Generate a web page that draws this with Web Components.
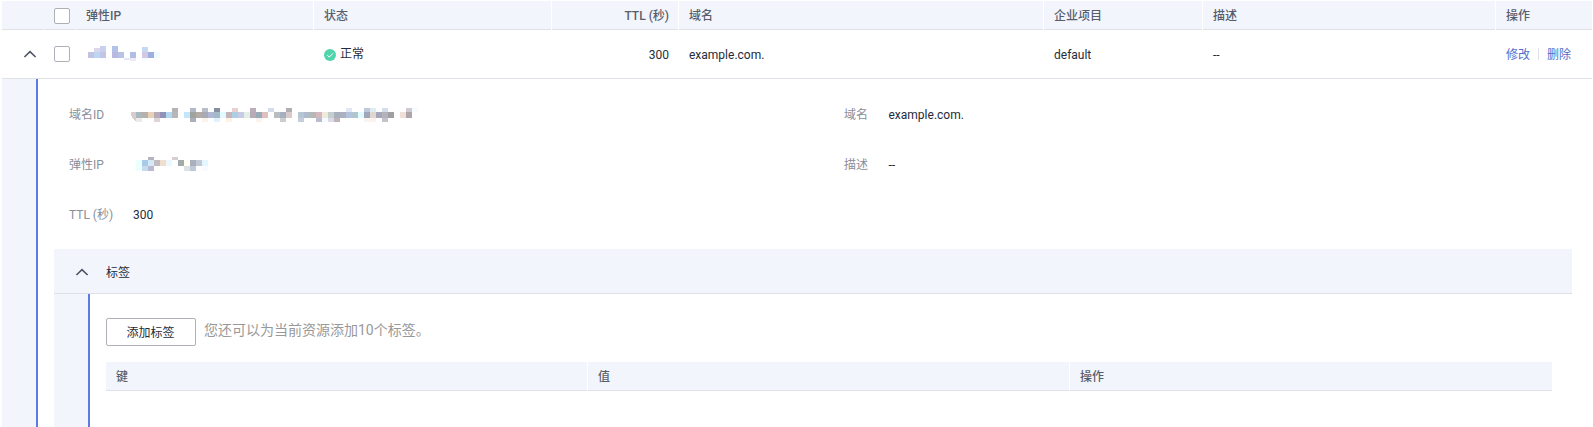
<!DOCTYPE html>
<html lang="zh-CN">
<head>
<meta charset="utf-8">
<title>弹性IP</title>
<style>
html, body { margin: 0; height: 100%; overflow: hidden; background: #fff; }
body { font: 12px/18px Roboto, "Noto Sans CJK SC", sans-serif; color: #252b3a; }
</style>
</head>
<body>
<dns-page></dns-page>
<script>
function define(name, html, setup) {
  customElements.define(name, class extends HTMLElement {
    connectedCallback() {
      if (this.shadowRoot) return;
      const t = document.createElement('template');
      t.innerHTML = html;
      this.attachShadow({ mode: 'open' }).appendChild(t.content.cloneNode(true));
      if (setup) setup(this, this.shadowRoot);
    }
  });
}

define('ui-checkbox', `<style>
:host { display: block; box-sizing: border-box; width: 16px; height: 16px; border: 1px solid #adb0b8; border-radius: 2px; background: #fff; }
</style>`);

define('ui-chevron', `<style>
:host { display: block; width: 14px; height: 8px; }
svg { display: block; }
</style><svg width="14" height="8" viewBox="0 0 14 8"><path d="M1.4 7 7 1.6 12.6 7" fill="none" stroke="#4e5463" stroke-width="1.6"/></svg>`);

define('ui-status', `<style>
:host { display: flex; align-items: center; gap: 4px; }
svg { display: block; flex: none; margin-top: 1px; }
</style><svg width="12" height="12" viewBox="0 0 12 12"><circle cx="6" cy="6" r="6" fill="#50d4ab"/><path d="M3.2 6.1 5.3 8.1 8.9 4.4" fill="none" stroke="#fff" stroke-width="1"/></svg><span><slot></slot></span>`);

define('ui-th', `<style>
:host { display: flex; align-items: center; box-sizing: border-box; height: 29px; padding: 0 9px 0 10px; border-right: 1px solid #fff; background: linear-gradient(#dfe1e6, #dfe1e6) bottom / 100% 1px no-repeat #f2f5fc; color: #575d6c; font-weight: 500; }
:host([right]) { justify-content: flex-end; }
:host([last]) { border-right: 0; }
:host([plain]) { padding-right: 0; border-right: 0; background-position: left bottom; background-size: calc(100% - 1px) 1px; }
</style><span><slot></slot></span>`);

define('ui-td', `<style>
:host { display: flex; align-items: center; box-sizing: border-box; height: 48px; padding: 0 9px 0 10px; }
:host([text]) { padding-top: 2px; }
:host([right]) { justify-content: flex-end; padding-right: 10px; }
</style><slot></slot>`);

define('ui-links', `<style>
:host { display: flex; align-items: center; color: #526ecc; }
i { width: 1px; height: 12px; margin: -2px 8px 0; background: #dfe1e6; }
</style><slot name="a"></slot><i></i><slot name="b"></slot>`);

/* Censored values: rows of coloured cells, "x,y,width,height,colour" */
const mosaics = {
  ip: [72, 16, `0,6,6,6,c2c3e2 6,2,6,4,dcd6e8 6,6,6,6,bad7f3 12,0,6,6,c9d0ef 12,6,6,6,c3c5e5 12,12,6,3,f8feff 24,0,6,6,b3c0e8 24,6,6,6,b8b9de 30,6,6,6,b8c3e6 36,12,6,2,e5e8f8 42,6,6,6,b1bee4 42,12,6,3,efeaf6 54,1,6,5,c9d8f2 54,6,6,6,d2c8e2 54,12,6,3,f7fbff 60,6,6,6,9daee0 66,6,6,6,f0fbff`],
  eip: [72, 14, `0,3,6,11,ebffff 6,3,6,6,a9c9e8 6,9,6,5,c9d9ee 12,0,6,3,b5b5bd 12,3,6,6,d4e9f8 12,9,6,5,b9b9d0 18,3,6,6,c2bcc0 24,3,6,6,f0dfce 30,3,6,6,ebf9ff 36,0,6,3,d7cfcc 42,3,6,6,a4aaab 48,3,6,6,fffff2 48,9,6,5,dde2e8 54,3,6,6,acafbd 54,9,6,5,c0c9d6 60,3,6,6,c0c9d5 60,9,6,5,c0c9d5 66,3,6,6,e4f6ff 66,9,6,5,f8fbff`.replace('60,9,6,5,c0c9d5 ', '')]
};
const rowsOf = {
  up: [0, 4, '172 b7b3b3 190 b2bac8 202 b8bdc9 214 8591a0 232 e8d2d0 250 bbaeb9 268 d4dceb 286 b0aeae 346 dfe8f3 364 bdc9d8 370 dfecf2 382 d4ddec 406 cfc9d4 412 f5fcff'],
  mid: [4, 6, '136 a9b7bf 142 b7b1ac 148 e9d1b6 154 b7aab9 160 9191b9 166 b0d8f2 172 b7b7b7 184 c5e5fa 190 9fa39f 196 b2aca4 202 a7aab5 208 b0b7d5 214 a3bac6 220 e0faff 226 c5b5bb 232 afcde0 238 c8cbe6 244 e4efe8 250 b8aab7 256 99aab8 262 dfc0bd 274 bbbcbe 280 a4afc0 286 dac9ca 298 b7c6d3 304 b0bbce 310 b6b8b5 316 d5b7bf 322 edebd9 328 c4cecf 334 a8b1bb 340 abb1c1 346 b1c3dd 352 b2c4cd 358 e0faff 364 a0a7ba 370 dfd7d0 376 a4a6ba 382 b2b3bb 388 a0a0a2 400 f0dfd8 406 aca6aa'],
  low: [10, 4, '136 efeae5 154 ded6d6 190 adaebb 202 fbf2ec 214 dff2ff 226 fff2e2 256 fbf3ed 280 d1cacf 298 c8cddc 316 b9becd 322 f7fbff 328 d9dbe8 334 bdb3b8 364 fbf4ef 370 faf2ee 382 c4c3c8']
};
let idCells = '';
for (const [y, h, s] of Object.values(rowsOf)) {
  const p = s.split(' ');
  for (let i = 0; i < p.length; i += 2) idCells += `${p[i] - 131},${y},6,${h},${p[i + 1]} `;
}
mosaics.id = [288, 14, idCells.trim()];

define('ui-mosaic', `<style>:host { display: block; } svg { display: block; }</style>`, (el, root) => {
  const kind = el.getAttribute('kind');
  const [w, h, cells] = mosaics[kind];
  let s = cells.split(' ').map(c => {
    const [x, y, cw, ch, col] = c.split(',');
    return `<rect x="${x}" y="${y}" width="${cw}" height="${ch}" fill="#${col}"/>`;
  }).join('');
  if (kind === 'id') s += '<path d="M5 4H1.5Q0 4 0 6Q0 9 2.5 11L5 13Z" fill="#d9cccc"/>';
  const t = document.createElement('template');
  t.innerHTML = `<svg width="${w}" height="${h}" shape-rendering="crispEdges">${s}</svg>`;
  root.appendChild(t.content);
});

define('ui-field', `<style>
:host { display: flex; height: 18px; align-items: center; }
.l { color: #8a8e99; width: var(--lw, 64px); flex: none; }
</style><span class="l"><slot name="label"></slot></span><slot></slot>`);

define('ui-button', `<style>
:host { display: block; }
button { display: flex; align-items: center; justify-content: center; box-sizing: border-box; width: 90px; height: 28px; margin: 0; padding: 2px 1px 0 0; border: 1px solid #adb0b8; border-radius: 2px; background: #fff; font: inherit; color: #252b3a; }
</style><button><slot></slot></button>`);

/* Expanded area: tinted gutter with a blue rule beside the content */
define('ui-expansion', `<style>
:host { display: flex; }
.g { flex: none; width: 34px; background: #f2f5fc; border-right: 2px solid #5e7ce0; }
.c { flex: 1; min-width: 0; }
</style><div class="g"></div><div class="c"><slot></slot></div>`);

define('tag-panel', `<style>
:host { display: flex; flex-direction: column; }
header { display: flex; align-items: center; box-sizing: border-box; height: 45px; padding: 0 0 0 21px; gap: 17px; background: #f2f5fc; border-bottom: 1px solid #dfe1e6; }
header ui-chevron { margin-top: 1px; }
header span { margin-top: 3px; }
ui-expansion { flex: 1; }
.in { padding: 24px 20px 0 16px; }
.bar { display: flex; gap: 8px; height: 44px; }
.hint { font-size: 14px; line-height: 24px; color: #999; }
.t { display: grid; grid-template-columns: repeat(3, 482px); }
</style>
<header><ui-chevron></ui-chevron><span>标签</span></header>
<ui-expansion><div class="in">
<div class="bar"><ui-button>添加标签</ui-button><span class="hint">您还可以为当前资源添加10个标签。</span></div>
<div class="t"><ui-th>键</ui-th><ui-th>值</ui-th><ui-th last>操作</ui-th></div>
</div></ui-expansion>`);

define('record-detail', `<style>
:host { display: block; }
ui-expansion { height: 348px; }
.c { display: flex; flex-direction: column; height: 348px; box-sizing: border-box; padding: 27px 20px 0 16px; }
.f { display: grid; grid-template-columns: 775px 1fr; grid-auto-rows: 18px; row-gap: 32px; padding-left: 15px; height: 143px; }
.r { --lw: 44.5px; }
tag-panel { flex: 1; }
</style>
<ui-expansion><div class="c">
<div class="f">
<ui-field><span slot="label">域名ID</span><ui-mosaic kind="id" style="margin-left:-2px"></ui-mosaic></ui-field>
<ui-field class="r"><span slot="label">域名</span>example.com.</ui-field>
<ui-field><span slot="label">弹性IP</span><ui-mosaic kind="eip" style="margin:-2px 0 0 3px"></ui-mosaic></ui-field>
<ui-field class="r"><span slot="label">描述</span>--</ui-field>
<ui-field><span slot="label">TTL (秒)</span>300</ui-field>
</div>
<tag-panel></tag-panel>
</div></ui-expansion>`);

define('dns-page', `<style>
:host { display: block; width: 1590px; padding: 1px 0 0 2px; }
.row { display: grid; grid-template-columns: 42px 32px 238px 238px 127px 365px 159px 293px 96px; }
.body { border-bottom: 1px solid #dfe1e6; }
ui-td.x { padding: 0 0 0 21px; }
ui-td.k { padding: 0 0 0 10px; }
</style>
<div class="row">
<ui-th plain></ui-th><ui-th plain><ui-checkbox></ui-checkbox></ui-th><ui-th>弹性IP</ui-th><ui-th>状态</ui-th><ui-th right>TTL (秒)</ui-th><ui-th>域名</ui-th><ui-th>企业项目</ui-th><ui-th>描述</ui-th><ui-th last>操作</ui-th>
</div>
<div class="row body">
<ui-td class="x"><ui-chevron></ui-chevron></ui-td><ui-td class="k"><ui-checkbox></ui-checkbox></ui-td><ui-td><ui-mosaic kind="ip" style="margin-left:2px"></ui-mosaic></ui-td><ui-td><ui-status>正常</ui-status></ui-td><ui-td text right>300</ui-td><ui-td text>example.com.</ui-td><ui-td text>default</ui-td><ui-td text>--</ui-td><ui-td text><ui-links><span slot="a">修改</span><span slot="b">删除</span></ui-links></ui-td>
</div>
<record-detail></record-detail>`);
</script>
</body>
</html>
